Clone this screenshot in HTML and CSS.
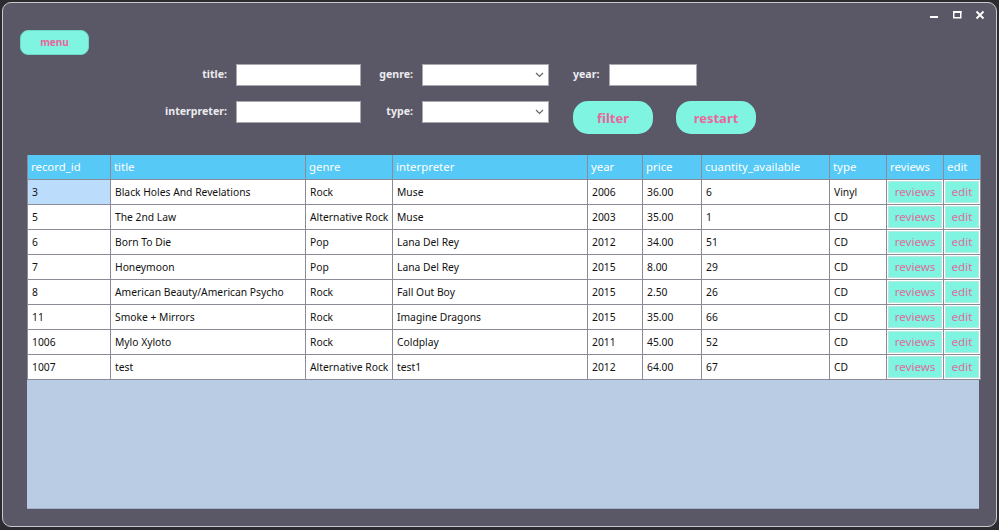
FILE: index.html
```html
<!DOCTYPE html>
<html lang="en">
<head>
<meta charset="utf-8">
<title>records</title>
<link rel="stylesheet" href="styles.css">
</head>
<body>
<div class="window">
  <div class="titlebar">
    <span class="ctl">
      <svg width="10" height="10" viewBox="0 0 10 10"><rect x="1" y="6" width="8" height="2" fill="#fff"/></svg>
    </span>
    <span class="ctl">
      <svg width="10" height="10" viewBox="0 0 10 10"><rect x="1.75" y="1.75" width="7" height="6" fill="none" stroke="#fff" stroke-width="1.5"/><rect x="1" y="1" width="8.5" height="2" fill="#fff"/></svg>
    </span>
    <span class="ctl">
      <svg width="10" height="10" viewBox="0 0 10 10"><path d="M1.5 1.5 L8.5 8.5 M8.5 1.5 L1.5 8.5" stroke="#fff" stroke-width="1.8"/></svg>
    </span>
  </div>
  <div class="menurow"><button class="btn menu">menu</button></div>
  <div class="filters">
    <label class="lbl">title:</label>
    <input class="field" type="text">
    <label class="lbl">genre:</label>
    <div class="select"><svg width="9" height="6" viewBox="0 0 9 6"><path d="M1 1 L4.5 4.5 L8 1" fill="none" stroke="#666" stroke-width="1.2"/></svg></div>
    <div class="cell5">
      <label class="lbl year">year:</label>
      <input class="field yearfield" type="text">
    </div>
    <label class="lbl">interpreter:</label>
    <input class="field" type="text">
    <label class="lbl">type:</label>
    <div class="select"><svg width="9" height="6" viewBox="0 0 9 6"><path d="M1 1 L4.5 4.5 L8 1" fill="none" stroke="#666" stroke-width="1.2"/></svg></div>
    <div class="cell5 btns">
      <button class="btn big">filter</button>
      <button class="btn big">restart</button>
    </div>
  </div>
  <div class="tablewrap">
    <table class="grid">
      <colgroup>
        <col style="width:83px"><col style="width:195px"><col style="width:87px"><col style="width:195px"><col style="width:55px"><col style="width:59px"><col style="width:128px"><col style="width:57px"><col style="width:57px"><col style="width:37px">
      </colgroup>
      <thead>
        <tr><th>record_id</th><th>title</th><th>genre</th><th>interpreter</th><th>year</th><th>price</th><th>cuantity_available</th><th>type</th><th>reviews</th><th>edit</th></tr>
      </thead>
      <tbody>
        <tr><td class="sel">3</td><td>Black Holes And Revelations</td><td>Rock</td><td>Muse</td><td>2006</td><td>36.00</td><td>6</td><td>Vinyl</td><td class="b"><span class="cb">reviews</span></td><td class="b"><span class="cb">edit</span></td></tr>
        <tr><td>5</td><td>The 2nd Law</td><td>Alternative Rock</td><td>Muse</td><td>2003</td><td>35.00</td><td>1</td><td>CD</td><td class="b"><span class="cb">reviews</span></td><td class="b"><span class="cb">edit</span></td></tr>
        <tr><td>6</td><td>Born To Die</td><td>Pop</td><td>Lana Del Rey</td><td>2012</td><td>34.00</td><td>51</td><td>CD</td><td class="b"><span class="cb">reviews</span></td><td class="b"><span class="cb">edit</span></td></tr>
        <tr><td>7</td><td>Honeymoon</td><td>Pop</td><td>Lana Del Rey</td><td>2015</td><td>8.00</td><td>29</td><td>CD</td><td class="b"><span class="cb">reviews</span></td><td class="b"><span class="cb">edit</span></td></tr>
        <tr><td>8</td><td>American Beauty/American Psycho</td><td>Rock</td><td>Fall Out Boy</td><td>2015</td><td>2.50</td><td>26</td><td>CD</td><td class="b"><span class="cb">reviews</span></td><td class="b"><span class="cb">edit</span></td></tr>
        <tr><td>11</td><td>Smoke + Mirrors</td><td>Rock</td><td>Imagine Dragons</td><td>2015</td><td>35.00</td><td>66</td><td>CD</td><td class="b"><span class="cb">reviews</span></td><td class="b"><span class="cb">edit</span></td></tr>
        <tr><td>1006</td><td>Mylo Xyloto</td><td>Rock</td><td>Coldplay</td><td>2011</td><td>45.00</td><td>52</td><td>CD</td><td class="b"><span class="cb">reviews</span></td><td class="b"><span class="cb">edit</span></td></tr>
        <tr><td>1007</td><td>test</td><td>Alternative Rock</td><td>test1</td><td>2012</td><td>64.00</td><td>67</td><td>CD</td><td class="b"><span class="cb">reviews</span></td><td class="b"><span class="cb">edit</span></td></tr>
      </tbody>
    </table>
  </div>
</div>
</body>
</html>
```
FILE: styles.css
```css
html, body {
  margin: 0;
  padding: 0;
  background: #2b2b30;
  font-family: "Noto Sans", "Open Sans", sans-serif;
}
.window {
  margin: 2px 0 0 2px;
  width: 995px;
  height: 525px;
  box-sizing: border-box;
  background: #5a5766;
  border: 1px solid #c9c9cf;
  border-radius: 9px;
  display: flex;
  flex-direction: column;
  padding: 0 17px 0 0;
  overflow: hidden;
}
.titlebar {
  height: 28px;
  display: flex;
  justify-content: flex-end;
  align-items: center;
  gap: 13px;
  margin-right: -6px;
  margin-top: -2px;
}
.ctl { width: 10px; height: 10px; display: block; }
.ctl svg { display: block; }
.menurow {
  padding-left: 17px;
  height: 25px;
}
.btn {
  border: none;
  background: #7ff4e0;
  color: #e8679d;
  font-family: "Noto Sans", sans-serif;
  font-weight: bold;
  padding: 0;
  cursor: pointer;
}
.menu {
  width: 69px;
  height: 25px;
  border-radius: 8px;
  font-size: 10px;
  border: 1px solid #6fd8c8;
}
.filters {
  margin-top: 10px;
  margin-left: 157px;
  display: grid;
  grid-template-columns: 76px 125px 61px 127px auto;
  grid-template-rows: 22px 33px;
  row-gap: 15px;
  align-items: start;
}
.lbl {
  color: #ecebf0;
  font-size: 10.6px;
  font-weight: bold;
  text-align: right;
  padding-right: 9px;
  line-height: 21px;
}
.field {
  margin: 0;
  box-sizing: border-box;
  height: 22px;
  width: 125px;
  border: 1px solid #a8a8b0;
  background: #fff;
  padding: 0;
}
.select {
  box-sizing: border-box;
  height: 22px;
  width: 127px;
  border: 1px solid #a8a8b0;
  background: #fff;
  display: flex;
  align-items: center;
  justify-content: flex-end;
  padding-right: 4px;
}
.cell5 {
  padding-left: 24px;
  display: flex;
  align-items: flex-start;
}
.year { padding-right: 10px; }
.yearfield { width: 88px; }
.btns { gap: 23px; }
.big {
  width: 80px;
  height: 33px;
  border-radius: 15px;
  font-size: 13px;
}
.tablewrap {
  margin-top: 21px;
  margin-left: 24px;
  height: 353px;
  background: #b9cce4;
  border-bottom: 1px solid #9fb0c8;
}
.grid {
  border-collapse: collapse;
  table-layout: fixed;
  width: 953px;
  font-size: 10.3px;
  color: #111;
}
.grid th {
  background: #56c9f6;
  color: #fff;
  font-weight: normal;
  text-align: left;
  font-size: 11.4px;
  height: 24px;
  line-height: 16px;
  padding: 0 3px;
  border: 1px solid #8a8a98;
  border-top: none;
  white-space: nowrap;
  overflow: hidden;
  box-sizing: border-box;
}
.grid td {
  background: #fff;
  height: 25px;
  line-height: 14px;
  padding: 0 4px;
  border: 1px solid #8a8a98;
  white-space: nowrap;
  overflow: hidden;
  box-sizing: border-box;
}
.grid td.sel { background: #bcdcfc; }
.grid td.b { padding: 1px; }
.cb {
  display: flex;
  align-items: center;
  justify-content: center;
  height: 22px;
  line-height: 14px;
  background: #7ff4e0;
  border: 1px solid #b8e8e0;
  box-sizing: border-box;
  color: #dd6f9e;
  font-size: 11.6px;
}
```
